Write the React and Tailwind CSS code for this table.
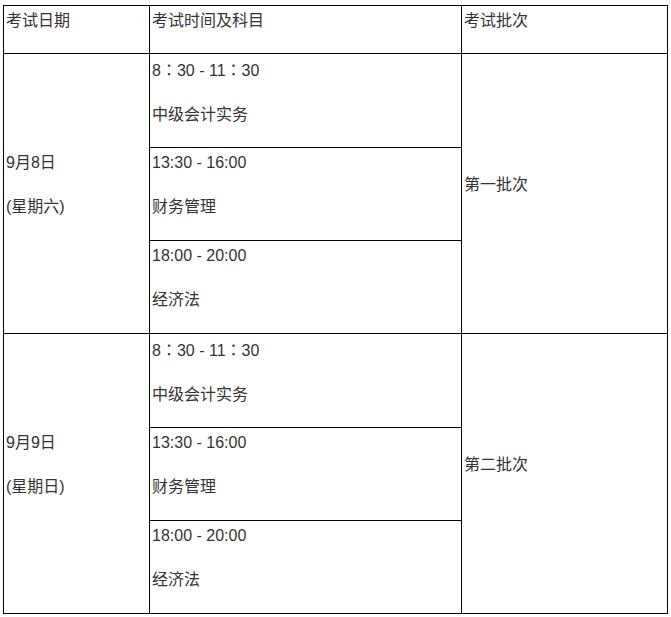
export default function App() {
    const days = [
        {
            date: "9月8日",
            week: "(星期六)",
            batch: "第一批次"
        },
        {
            date: "9月9日",
            week: "(星期日)",
            batch: "第二批次"
        }
    ];
    const colon = (
        <span style={{ fontFamily: '"Noto Sans CJK JP", sans-serif' }}>：</span>
    );
    const slots = [
        {
            time: (
                <>
                    8{colon}30 - 11{colon}30
                </>
            ),
            subject: "中级会计实务"
        },
        { time: "13:30 - 16:00", subject: "财务管理" },
        { time: "18:00 - 20:00", subject: "经济法" }
    ];
    const cell = "border border-black align-top pl-[2px] pr-1 pt-[3px]";
    const p = "leading-6 mb-5";
    return (
        <div
            className="bg-white w-[671px] h-[617px] pt-[5px] pl-[3px] text-[16px] text-[#333]"
            style={{ fontFamily: '"Liberation Sans", "Noto Sans CJK SC", sans-serif' }}
        >
            <table className="border-collapse table-fixed w-[664px]">
                <colgroup>
                    <col className="w-[146px]" />
                    <col className="w-[312px]" />
                    <col className="w-[206px]" />
                </colgroup>
                <tbody>
                    <tr className="h-[48px]">
                        <td className={cell}>
                            <p className="leading-6 mb-[19px]">考试日期</p>
                        </td>
                        <td className={cell}>
                            <p className="leading-6 mb-[19px]">考试时间及科目</p>
                        </td>
                        <td className={cell}>
                            <p className="leading-6 mb-[19px]">考试批次</p>
                        </td>
                    </tr>
                    {days.map((day, i) =>
                        slots.map((slot, j) => (
                            <tr key={`${i}-${j}`} className="h-[93px]">
                                {j === 0 && (
                                    <td rowSpan={3} className="border border-black align-middle pl-[2px] pt-[3px]">
                                        <p className={p}>{day.date}</p>
                                        <p className={p}>{day.week}</p>
                                    </td>
                                )}
                                <td className={cell}>
                                    <p className={p}>{slot.time}</p>
                                    <p className={p}>{slot.subject}</p>
                                </td>
                                {j === 0 && (
                                    <td rowSpan={3} className="border border-black align-middle pl-[2px] pt-[3px]">
                                        <p className={p}>{day.batch}</p>
                                    </td>
                                )}
                            </tr>
                        ))
                    )}
                </tbody>
            </table>
        </div>
    );
}
